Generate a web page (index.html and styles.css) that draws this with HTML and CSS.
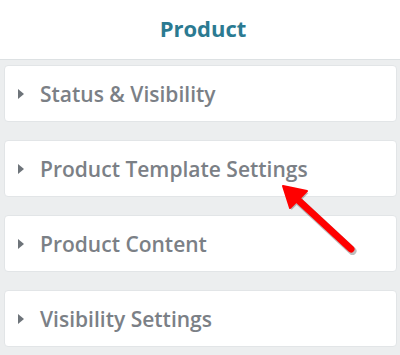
FILE: index.html
```html
<!DOCTYPE html>
<html lang="en">
<head>
    <meta charset="UTF-8">
    <title>Product</title>
    <link rel="stylesheet" href="styles.css">
</head>
<body>
    <div class="header">Product</div>
    <div class="panel">
        <div class="section"><span class="caret"></span>Status &amp; Visibility</div>
        <div class="section"><span class="caret"></span>Product Template Settings</div>
        <div class="section"><span class="caret"></span>Product Content</div>
        <div class="section"><span class="caret"></span>Visibility Settings</div>
    </div>
    <!-- annotation arrow -->
    <svg class="arrow" width="400" height="355" viewBox="0 0 400 355">
        <g transform="translate(1.5,2)" opacity="0.25">
            <line x1="351" y1="249" x2="297" y2="199" stroke="#000" stroke-width="8" stroke-linecap="round"/>
            <polygon points="283,186 307,191 290,208" fill="#000"/>
        </g>
        <line x1="351" y1="249" x2="297" y2="199" stroke="#f00" stroke-width="7" stroke-linecap="round"/>
        <polygon points="283,186 307,191 290,208" fill="#f00" stroke="#f00" stroke-width="2" stroke-linejoin="round"/>
    </svg>
</body>
</html>
```
FILE: styles.css
```css
body { margin: 0; width: 400px; height: 355px; overflow: hidden; background: #eceeef; font-family: "Open Sans", Arial, sans-serif; position: relative; }
.header { height: 55px; padding-bottom: 4px; background: #fff; border-bottom: 1px solid #dde1e3; display: flex; align-items: center; justify-content: center; padding-left: 6px; font-size: 22px; font-weight: 700; color: #2b7a91; }
.panel { display: flex; flex-direction: column; gap: 18px; padding: 5px 3px 0 4px; }
.section { height: 55px; background: #fff; border: 1px solid #e2e5e7; border-radius: 4px; display: flex; align-items: center; padding-left: 13px; font-size: 21px; font-weight: 600; color: #7b8086; }
.caret { width: 0; height: 0; border-top: 5px solid transparent; border-bottom: 5px solid transparent; border-left: 6px solid #6e747a; margin-right: 16px; }
.arrow { position: absolute; left: 0; top: 0; pointer-events: none; }
```
